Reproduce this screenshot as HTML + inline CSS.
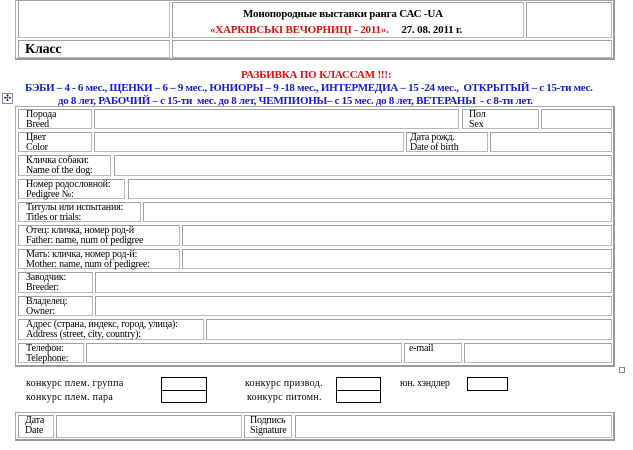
<!DOCTYPE html>
<html><head><meta charset="utf-8"><style>
body{margin:0;width:633px;height:450px;background:#fff;position:relative;overflow:hidden;font-family:"Liberation Serif","DejaVu Serif",serif;color:#000}
.b{position:absolute;box-sizing:border-box;border:1px solid #b8b8b8;border-top-color:#a0a0a0;border-left-color:#a0a0a0}
.o{position:absolute;box-sizing:border-box;border:1px solid #a8a8a8;border-right:2px solid #9a9a9a;border-bottom:2px solid #9a9a9a}
.t{position:absolute;font-size:10px;line-height:10px;white-space:nowrap;letter-spacing:-0.2px}
.k{position:absolute;border:1px solid #000;box-sizing:border-box}
</style></head><body>
<div class="o" style="left:15px;top:0;width:600px;height:60px"></div>
<div class="b" style="left:18px;top:0;width:152px;height:38px"></div>
<div class="b" style="left:172px;top:2px;width:352px;height:36px"></div>
<div class="b" style="left:526px;top:2px;width:86px;height:36px"></div>
<div class="b" style="left:18px;top:40px;width:152px;height:18px"></div>
<div class="b" style="left:172px;top:40px;width:440px;height:18px"></div>
<div class="t" style="left:243px;top:9px;font-size:11px;font-weight:bold">Монопородные выставки ранга САС -UA</div>
<div class="t" style="left:210px;top:25px;font-size:11px;font-weight:bold"><span style="color:#e01010">«ХАРКІВСЬКІ ВЕЧОРНИЦІ - 2011».</span>&nbsp;&nbsp;&nbsp;&nbsp; 27. 08. 2011 г.</div>
<div class="t" style="left:25px;top:43px;font-size:14px;line-height:14px;font-weight:bold">Класс</div>
<div class="t" style="left:241px;top:70px;font-size:11px;font-weight:bold;color:#e01010">РАЗБИВКА ПО КЛАССАМ !!!:</div>
<div class="t" style="left:25px;top:83px;font-size:11px;font-weight:bold;color:#1a1ad0;letter-spacing:-0.3px">БЭБИ – 4 - 6 мес., ЩЕНКИ – 6 – 9 мес., ЮНИОРЫ – 9 -18 мес., ИНТЕРМЕДИА – 15 -24 мес.,&nbsp; ОТКРЫТЫЙ – с 15-ти мес.</div>
<div class="t" style="left:58px;top:96px;font-size:11px;font-weight:bold;color:#1a1ad0;letter-spacing:-0.3px">до 8 лет, РАБОЧИЙ – с 15-ти&nbsp; мес. до 8 лет, ЧЕМПИОНЫ– с 15 мес. до 8 лет, ВЕТЕРАНЫ&nbsp; - с 8-ти лет.</div>
<div style="position:absolute;left:2px;top:93px;width:9px;height:9px;border:1px solid #88a;font-size:9px;line-height:9px;text-align:center;color:#225">✣</div>
<div class="o" style="left:15px;top:106px;width:600px;height:261px"></div>
<div class="b" style="left:18px;top:109px;width:74px;height:20px"></div><div class="b" style="left:94px;top:109px;width:365px;height:20px"></div><div class="b" style="left:462px;top:109px;width:77px;height:20px"></div><div class="b" style="left:541px;top:109px;width:71px;height:20px"></div>
<div class="t" style="left:26px;top:110px">Порода<br>Breed</div><div class="t" style="left:469px;top:110px">Пол<br>Sex</div>
<div class="b" style="left:18px;top:132px;width:74px;height:20px"></div><div class="b" style="left:94px;top:132px;width:310px;height:20px"></div><div class="b" style="left:406px;top:132px;width:82px;height:20px"></div><div class="b" style="left:490px;top:132px;width:122px;height:20px"></div>
<div class="t" style="left:26px;top:133px">Цвет<br>Color</div><div class="t" style="left:410px;top:133px">Дата рожд.<br>Date of birth</div>
<div class="b" style="left:18px;top:155px;width:93px;height:21px"></div><div class="b" style="left:114px;top:155px;width:498px;height:21px"></div>
<div class="t" style="left:26px;top:156px">Кличка собаки:<br>Name of the dog:</div>
<div class="b" style="left:18px;top:179px;width:107px;height:20px"></div><div class="b" style="left:128px;top:179px;width:484px;height:20px"></div>
<div class="t" style="left:26px;top:180px">Номер родословной:<br>Pedigree №:</div>
<div class="b" style="left:18px;top:202px;width:123px;height:20px"></div><div class="b" style="left:143px;top:202px;width:469px;height:20px"></div>
<div class="t" style="left:26px;top:203px">Титулы или испытания:<br>Titles or trials:</div>
<div class="b" style="left:18px;top:225px;width:162px;height:21px"></div><div class="b" style="left:182px;top:225px;width:430px;height:21px"></div>
<div class="t" style="left:26px;top:226px">Отец: кличка, номер род-й<br>Father: name, num of pedigree</div>
<div class="b" style="left:18px;top:249px;width:162px;height:20px"></div><div class="b" style="left:182px;top:249px;width:430px;height:20px"></div>
<div class="t" style="left:26px;top:250px">Мать: кличка, номер род-й:<br>Mother: name, num of pedigree:</div>
<div class="b" style="left:18px;top:272px;width:75px;height:21px"></div><div class="b" style="left:95px;top:272px;width:517px;height:21px"></div>
<div class="t" style="left:26px;top:273px">Заводчик:<br>Breeder:</div>
<div class="b" style="left:18px;top:296px;width:75px;height:20px"></div><div class="b" style="left:95px;top:296px;width:517px;height:20px"></div>
<div class="t" style="left:26px;top:297px">Владелец:<br>Owner:</div>
<div class="b" style="left:18px;top:319px;width:186px;height:21px"></div><div class="b" style="left:206px;top:319px;width:406px;height:21px"></div>
<div class="t" style="left:26px;top:320px">Адрес (страна, индекс, город, улица):<br>Address (street, city, country):</div>
<div class="b" style="left:18px;top:343px;width:66px;height:20px"></div><div class="b" style="left:86px;top:343px;width:316px;height:20px"></div><div class="b" style="left:404px;top:343px;width:58px;height:20px"></div><div class="b" style="left:464px;top:343px;width:148px;height:20px"></div>
<div class="t" style="left:26px;top:344px">Телефон:<br>Telephone:</div><div class="t" style="left:409px;top:344px">e-mail</div>
<div style="position:absolute;left:619px;top:367px;width:4px;height:4px;border:1px solid #888"></div>
<div class="t" style="left:26px;top:379px;letter-spacing:0.3px">конкурс плем. группа</div>
<div class="t" style="left:26px;top:393px;letter-spacing:0.3px">конкурс плем. пара</div>
<div class="k" style="left:161px;top:377px;width:46px;height:14px"></div>
<div class="k" style="left:161px;top:390px;width:46px;height:13px"></div>
<div class="t" style="left:245px;top:379px;letter-spacing:0.3px">конкурс призвод.</div>
<div class="t" style="left:247px;top:393px;letter-spacing:0.3px">конкурс питомн.</div>
<div class="k" style="left:336px;top:377px;width:45px;height:14px"></div>
<div class="k" style="left:336px;top:390px;width:45px;height:13px"></div>
<div class="t" style="left:400px;top:379px">юн. хэндлер</div>
<div class="k" style="left:467px;top:377px;width:41px;height:14px"></div>
<div class="o" style="left:15px;top:412px;width:600px;height:29px"></div>
<div class="b" style="left:18px;top:415px;width:36px;height:23px"></div><div class="b" style="left:56px;top:415px;width:186px;height:23px"></div><div class="b" style="left:244px;top:415px;width:48px;height:23px"></div><div class="b" style="left:295px;top:415px;width:317px;height:23px"></div>
<div class="t" style="left:25px;top:416px">Дата<br>Date</div><div class="t" style="left:250px;top:416px">Подпись<br>Signature</div>
</body></html>
